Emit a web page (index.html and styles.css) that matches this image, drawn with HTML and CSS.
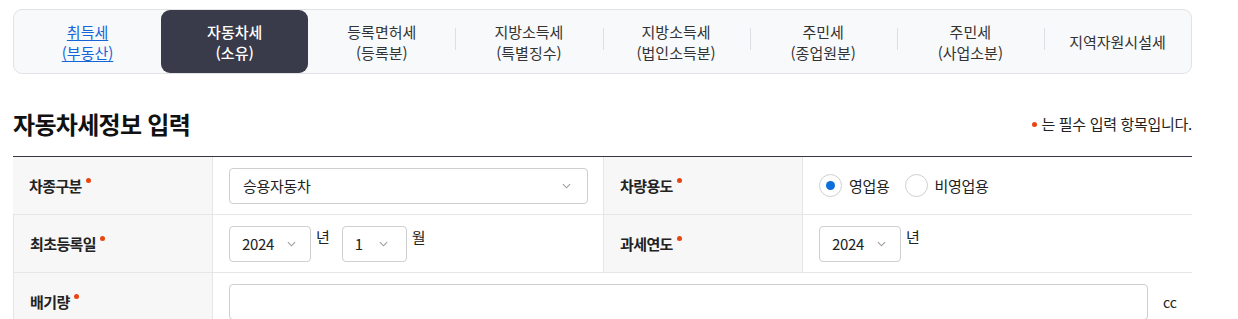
FILE: index.html
```html
<!DOCTYPE html>
<html lang="ko">
<head>
<meta charset="utf-8">
<link rel="stylesheet" href="styles.css">
</head>
<body>
<div class="wrap">
  <nav class="tabs">
    <a class="tab link"><span>취득세<br>(부동산)</span></a>
    <a class="tab active"><span>자동차세<br>(소유)</span></a>
    <a class="tab"><span>등록면허세<br>(등록분)</span></a>
    <a class="tab sep"><span>지방소득세<br>(특별징수)</span></a>
    <a class="tab sep"><span>지방소득세<br>(법인소득분)</span></a>
    <a class="tab sep"><span>주민세<br>(종업원분)</span></a>
    <a class="tab sep"><span>주민세<br>(사업소분)</span></a>
    <a class="tab sep"><span>지역자원시설세</span></a>
  </nav>

  <div class="head">
    <h2 class="title">자동차세정보 입력</h2>
    <p class="note"><i class="dot"></i>는 필수 입력 항목입니다.</p>
  </div>

  <div class="form">
    <div class="lbl">차종구분<i class="req"></i></div>
    <div class="val">
      <div class="select wide"><span>승용자동차</span><svg class="chev" viewBox="0 0 10 6"><path d="M1 1l4 4 4-4"/></svg></div>
    </div>
    <div class="lbl">차량용도<i class="req"></i></div>
    <div class="val">
      <label class="radio"><span class="circle on"></span>영업용</label>
      <label class="radio"><span class="circle"></span>비영업용</label>
    </div>

    <div class="lbl">최초등록일<i class="req"></i></div>
    <div class="val">
      <div class="select year"><span>2024</span><svg class="chev" viewBox="0 0 10 6"><path d="M1 1l4 4 4-4"/></svg></div>
      <span class="unit">년</span>
      <div class="select month"><span>1</span><svg class="chev" viewBox="0 0 10 6"><path d="M1 1l4 4 4-4"/></svg></div>
      <span class="unit">월</span>
    </div>
    <div class="lbl">과세연도<i class="req"></i></div>
    <div class="val">
      <div class="select year"><span>2024</span><svg class="chev" viewBox="0 0 10 6"><path d="M1 1l4 4 4-4"/></svg></div>
      <span class="unit">년</span>
    </div>

    <div class="lbl">배기량<i class="req"></i></div>
    <div class="val span3">
      <div class="input"></div>
      <span class="cc">cc</span>
    </div>
  </div>
</div>
</body>
</html>
```

FILE: styles.css
```css
* { box-sizing: border-box; }
html, body { margin: 0; padding: 0; background: #fff; }
body {
  font-family: "Noto Sans CJK KR", "Noto Sans", sans-serif;
  color: #222;
  overflow: hidden;
}
.wrap {
  width: 1179px;
  margin: 9px 0 0 13px;
}
.tabs {
  display: flex;
  height: 65px;
  border: 1px solid #e1e3e6;
  border-radius: 9px;
  background: #f8f9fa;
}
.tab {
  flex: 1;
  display: flex;
  align-items: center;
  justify-content: center;
  text-align: center;
  font-size: 15px;
  line-height: 21px;
  color: #333;
  letter-spacing: 0;
  position: relative;
}
.tab.sep::before {
  content: "";
  position: absolute;
  left: 0;
  top: 18px;
  height: 22px;
  width: 1px;
  background: #dcdfe3;
}
.tab.link { color: #1565d8; }
.tab.link span { text-decoration: underline; text-underline-offset: 2px; }
.tab.active {
  background: #393a4a;
  color: #fff;
  border-radius: 9px;
  font-weight: 500;
}
.head {
  display: flex;
  justify-content: space-between;
  align-items: center;
  margin-top: 32px;
  height: 34px;
}
.title {
  margin: 0;
  font-size: 24px;
  font-weight: 700;
  letter-spacing: -0.7px;
  color: #111;
}
.note {
  margin: 0;
  font-size: 15px;
  letter-spacing: -0.3px;
  color: #222;
  display: flex;
  align-items: center;
  gap: 4px;
}
.dot {
  width: 5px; height: 5px; border-radius: 50%;
  background: #e8450f;
  display: inline-block;
  margin-top: 3px;
}
.form {
  margin-top: 16px;
  border-top: 1px solid #363747;
  display: grid;
  grid-template-columns: 200px 390px 200px 1fr;
}
.lbl, .val {
  height: 58px;
  border-bottom: 1px solid #e6e6e6;
  display: flex;
  align-items: center;
}
.lbl {
  background: #f7f7f7;
  padding-left: 16px;
  font-size: 15px;
  font-weight: 700;
  letter-spacing: -0.6px;
  color: #222;
  border-right: 1px solid #e6e6e6;
}
.val { padding-left: 16px; }
.val + .lbl { border-left: 1px solid #e6e6e6; }
.span3 { grid-column: span 3; }
.req {
  width: 5px; height: 5px; border-radius: 50%;
  background: #e8450f;
  display: inline-block;
  margin-left: 4px;
  align-self: center;
  transform: translateY(-5px);
}
.select {
  height: 36px;
  border: 1px solid #cfcfcf;
  border-radius: 4px;
  background: #fff;
  display: flex;
  align-items: center;
  justify-content: space-between;
  padding: 0 16px 0 13px;
  font-size: 15px;
  color: #222;
  letter-spacing: -0.3px;
}
.select.wide { width: 359px; }
.select.year { width: 82px; padding-right: 14px; padding-left: 12px; }
.select.month { width: 65px; padding-left: 12px; padding-right: 18px; }
.chev { width: 9px; height: 6px; }
.chev path { fill: none; stroke: #9a9a9a; stroke-width: 1.2; }
.unit {
  font-size: 15px;
  margin: 0 12px 0 5px;
  align-self: flex-start;
  margin-top: 11px;
}
.radio {
  display: flex;
  align-items: center;
  font-size: 15px;
  margin-right: 15px;
  letter-spacing: -0.3px;
}
.circle {
  width: 23px; height: 23px;
  border: 1px solid #cfcfcf;
  border-radius: 50%;
  margin-right: 7px;
  background: #fff;
  display: inline-flex;
  align-items: center;
  justify-content: center;
}
.circle.on::after {
  content: "";
  width: 9px; height: 9px;
  border-radius: 50%;
  background: #0b6fdb;
}
.input {
  width: 919px;
  height: 36px;
  border: 1px solid #cfcfcf;
  border-radius: 4px;
  background: #fff;
}
.cc {
  font-size: 14px;
  margin-left: 15px;
  color: #222;
}
```
